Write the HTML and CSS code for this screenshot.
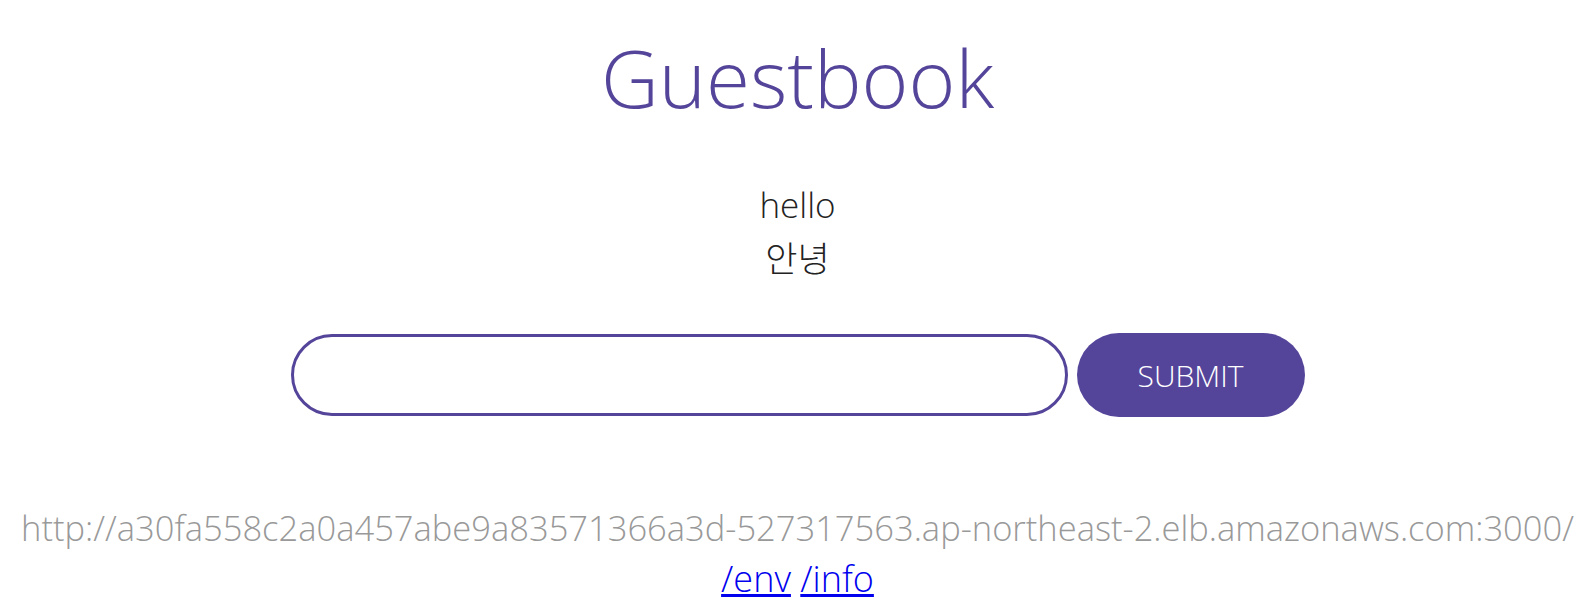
FILE: index.html
```html
<!DOCTYPE html>
<html>
<head>
<meta charset="utf-8">
<link rel="stylesheet" href="styles.css">
</head>
<body>
<main class="page">
  <h1 class="title">Guestbook</h1>
  <ul class="entries">
    <li>hello</li>
    <li>안녕</li>
  </ul>
  <form class="form">
    <input class="field" type="text">
    <button class="submit" type="button">SUBMIT</button>
  </form>
  <footer class="footer">
    <div class="host">http://a30fa558c2a0a457abe9a83571366a3d-527317563.ap-northeast-2.elb.amazonaws.com:3000/</div>
    <div class="links"><a href="#">/env</a> <a href="#">/info</a></div>
  </footer>
</main>
</body>
</html>
```
FILE: styles.css
```css
html, body {
  margin: 0;
  padding: 0;
  background: #fff;
}
body {
  font-family: "Open Sans", "Noto Sans CJK KR", sans-serif;
  font-weight: 300;
  color: #222;
}
.page {
  display: flex;
  flex-direction: column;
  align-items: center;
  text-align: center;
}
.title {
  margin: 22px 0 0;
  font-size: 80px;
  line-height: 110px;
  font-weight: 300;
  color: #55459a;
}
.entries {
  list-style: none;
  margin: 46px 0 0;
  padding: 0;
  font-size: 35px;
  line-height: 54px;
}
.entries li {
  margin: 0;
}
.form {
  display: flex;
  align-items: center;
  gap: 9px;
  margin-top: 47px;
}
.field {
  width: 777px;
  height: 82px;
  box-sizing: border-box;
  border: 3px solid #55459a;
  border-radius: 41px;
  outline: none;
  padding: 0 30px;
  font-size: 28px;
}
.submit {
  width: 228px;
  height: 84px;
  border: none;
  border-radius: 42px;
  background: #55459a;
  color: #fff;
  font-family: "Open Sans", sans-serif;
  font-weight: 300;
  font-size: 30px;
}
.footer {
  margin-top: 85px;
  font-size: 34.5px;
  line-height: 51px;
}
.host {
  color: #999;
}
.links {
  font-size: 36px;
}
.links a {
  color: #0000ee;
}
```
